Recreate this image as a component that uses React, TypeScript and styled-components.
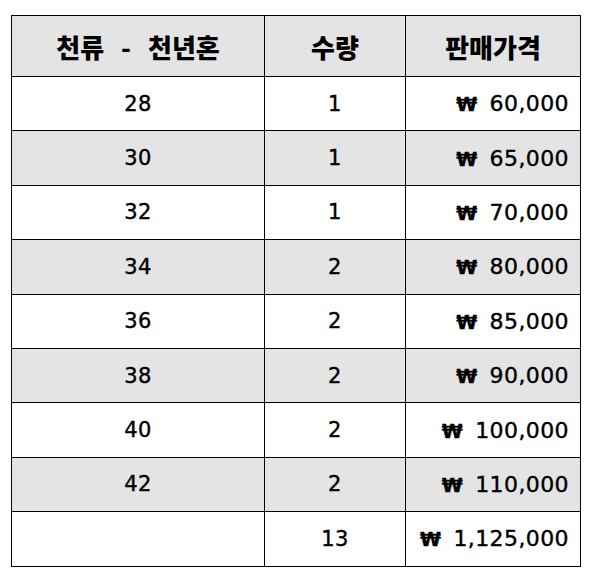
import styled, { createGlobalStyle } from "styled-components";

const GlobalStyle = createGlobalStyle`
  body {
    margin: 0;
    background: #ffffff;
  }
`;

const rows = [
  { size: "28", qty: "1", price: "60,000" },
  { size: "30", qty: "1", price: "65,000" },
  { size: "32", qty: "1", price: "70,000" },
  { size: "34", qty: "2", price: "80,000" },
  { size: "36", qty: "2", price: "85,000" },
  { size: "38", qty: "2", price: "90,000" },
  { size: "40", qty: "2", price: "100,000" },
  { size: "42", qty: "2", price: "110,000" },
];

export default function App() {
  return (
    <>
      <GlobalStyle />
      <Page>
        <Table>
          <colgroup>
            <col style={{ width: 253 }} />
            <col style={{ width: 141 }} />
            <col style={{ width: 175 }} />
          </colgroup>
          <thead>
            <tr>
              <Head>천류 - 천년혼</Head>
              <Head>수량</Head>
              <Head>판매가격</Head>
            </tr>
          </thead>
          <tbody>
            {rows.map((r, i) => (
              <Row key={r.size} $shaded={i % 2 === 1}>
                <Cell>{r.size}</Cell>
                <Cell>{r.qty}</Cell>
                <PriceCell>
                  <Won>₩</Won>
                  {r.price}
                </PriceCell>
              </Row>
            ))}
            <Row $shaded={false}>
              <Cell />
              <Cell>13</Cell>
              <PriceCell>
                <Won>₩</Won>
                1,125,000
              </PriceCell>
            </Row>
          </tbody>
        </Table>
      </Page>
    </>
  );
}

const Page = styled.div`
  padding: 15px 11px;
`;

const Table = styled.table`
  border-collapse: collapse;
  table-layout: fixed;
  width: 570px;
  border: 1.5px solid #000;

  td,
  th {
    border: 1px solid #000;
    padding: 0;
  }
`;

const Head = styled.th`
  height: 60px;
  background: #e4e4e4;
  font-family: "Noto Sans CJK KR", "Noto Sans", sans-serif;
  font-weight: 900;
  font-size: 26px;
  word-spacing: 11px;
  text-align: center;
  color: #000;
`;

const Row = styled.tr<{ $shaded: boolean }>`
  height: 54.4px;
  background: ${(p) => (p.$shaded ? "#e4e4e4" : "#ffffff")};
`;

const Cell = styled.td`
  text-align: center;
  font-family: "DejaVu Sans", sans-serif;
  font-size: 21px;
  letter-spacing: 0.5px;
  color: #000;
  -webkit-text-stroke: 0.4px #000;
`;

const PriceCell = styled.td`
  text-align: right;
  padding-right: 11px !important;
  font-family: "DejaVu Sans", sans-serif;
  font-size: 22px;
  letter-spacing: 0.4px;
  color: #000;
  -webkit-text-stroke: 0.4px #000;
`;

const Won = styled.span`
  font-family: "DejaVu Sans", sans-serif;
  font-weight: 700;
  font-size: 19px;
  margin-right: 12px;
`;
